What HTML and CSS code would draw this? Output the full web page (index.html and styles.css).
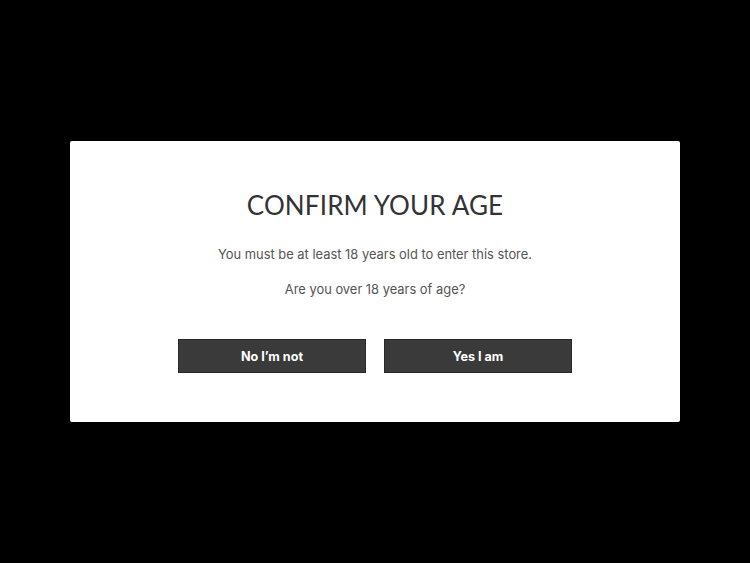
FILE: index.html
```html
<!DOCTYPE html>
<html>
<head>
<meta charset="utf-8">
<link rel="stylesheet" href="styles.css">
</head>
<body>
<div class="overlay">
  <div class="modal">
    <h1 class="title">CONFIRM YOUR AGE</h1>
    <p class="text">You must be at least 18 years old to enter this store.</p>
    <p class="text question">Are you over 18 years of age?</p>
    <div class="actions">
      <button class="btn">No I’m not</button>
      <button class="btn">Yes I am</button>
    </div>
  </div>
</div>
</body>
</html>
```

FILE: styles.css
```css
html, body {
  margin: 0;
  padding: 0;
  height: 100%;
  background: #000;
}
.overlay {
  height: 100%;
  display: flex;
  align-items: center;
  justify-content: center;
}
.modal {
  width: 610px;
  height: 281px;
  box-sizing: border-box;
  background: #fff;
  border-radius: 2px;
  display: flex;
  flex-direction: column;
  align-items: center;
  padding-top: 48px;
}
.title {
  margin: 0;
  font-family: "Lato", sans-serif;
  font-weight: 400;
  font-size: 26px;
  line-height: 32px;
  color: #333;
  letter-spacing: 0.15px;
}
.text {
  margin: 0;
  font-family: "Inter", "Liberation Sans", sans-serif;
  font-size: 12.9px;
  line-height: 20px;
  color: #555;
}
.title + .text { margin-top: 24px; }
.question { margin-top: 15px; }
.actions {
  display: flex;
  gap: 18px;
  margin-top: 39px;
}
.btn {
  width: 188px;
  height: 34px;
  background: #3a3a3a;
  border: 1px solid #2a2a2a;
  border-radius: 0;
  color: #fff;
  font-family: "Inter", "Liberation Sans", sans-serif;
  font-weight: 700;
  font-size: 12.6px;
  padding: 0;
}
```
